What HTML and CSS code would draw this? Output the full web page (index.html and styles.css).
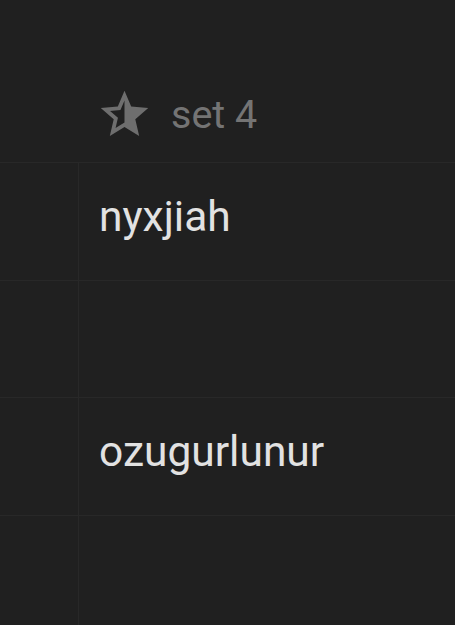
FILE: index.html
```html
<!DOCTYPE html>
<html lang="en">
<head>
  <meta charset="UTF-8" />
  <meta name="viewport" content="width=device-width, initial-scale=1.0" />
  <title>set 4</title>
  <link rel="stylesheet" href="styles.css">
</head>
<body>
  <div class="board">
    <div class="set-head">
      <svg class="star" viewBox="0 0 24 24" aria-hidden="true">
        <path fill-rule="evenodd" d="M12 17.27L18.18 21l-1.64-7.03L22 9.24l-7.19-.61L12 2 9.19 8.63 2 9.24l5.46 4.73L5.82 21z M12 15.4l-3.76 2.27 1-4.28-3.32-2.88 4.38-.38L12 6.1z"/>
      </svg>
      <span class="set-title">set 4</span>
    </div>
    <div class="rows">
      <div class="gutter"></div><div class="cell">nyxjiah</div>
      <div class="gutter"></div><div class="cell"></div>
      <div class="gutter"></div><div class="cell">ozugurlunur</div>
      <div class="gutter"></div><div class="cell"></div>
    </div>
  </div>
</body>
</html>
```

FILE: styles.css
```css
body {
  margin: 0;
  background-color: #202020;
  font-family: Roboto, "Noto Sans", sans-serif;
  color: #e2e2e2;
  overflow: hidden;
}
.board {
  width: 100%;
}
.set-head {
  display: flex;
  align-items: center;
  gap: 18px;
  height: 162px;
  box-sizing: border-box;
  padding: 67px 0 0 96px;
  color: #747474;
}
.star {
  width: 57px;
  height: 57px;
  fill: #6e6e6e;
}
.set-title {
  font-size: 39.5px;
}
.rows {
  display: grid;
  grid-template-columns: 79px 1fr;
  grid-auto-rows: 117.5px;
}
.gutter, .cell {
  border-top: 1px solid #282828;
}
.gutter {
  border-right: 1px solid #282828;
}
.cell {
  display: flex;
  align-items: center;
  padding: 0 0 10px 20px;
  box-sizing: border-box;
  font-size: 42.5px;
}
```
